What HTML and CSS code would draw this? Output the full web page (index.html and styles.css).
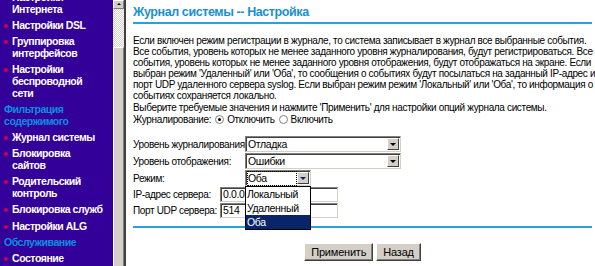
FILE: index.html
```html
<!DOCTYPE html>
<html lang="ru">
<head>
    <meta charset="UTF-8">
    <title>Журнал системы -- Настройка</title>
    <link rel="stylesheet" href="styles.css">
</head>
<body>
    <div class="page">
        <nav class="sidebar">
            <ul class="menu">
                <li class="item">Настройки<br>Интернета</li>
                <li class="item">Настройки DSL</li>
                <li class="item">Группировка<br>интерфейсов</li>
                <li class="item">Настройки<br>беспроводной<br>сети</li>
                <li class="section">Фильтрация<br>содержимого</li>
                <li class="item">Журнал системы</li>
                <li class="item">Блокировка<br>сайтов</li>
                <li class="item">Родительский<br>контроль</li>
                <li class="item">Блокировка служб</li>
                <li class="item">Настройки ALG</li>
                <li class="section">Обслуживание</li>
                <li class="item">Состояние</li>
            </ul>
        </nav>

        <div class="scrollbar">
            <div class="sb-up"></div>
            <div class="sb-track"></div>
            <div class="sb-thumb"></div>
        </div>

        <main class="content">
            <h1 class="title">Журнал системы -- Настройка</h1>

            <p class="intro">
                Если включен режим регистрации в журнале, то система записывает в журнал все выбранные события.<br>
                Все события, уровень которых не менее заданного уровня журналирования, будут регистрироваться. Все<br>
                события, уровень которых не менее заданного уровня отображения, будут отображаться на экране. Если<br>
                выбран режим 'Удаленный' или 'Оба', то сообщения о событиях будут посылаться на заданный IP-адрес и<br>
                порт UDP удаленного сервера syslog. Если выбран режим режим 'Локальный' или 'Оба', то информация о<br>
                событиях сохраняется локально.
            </p>
            <p class="hint">Выберите требуемые значения и нажмите 'Применить' для настройки опций журнала системы.</p>

            <div class="radio-row">
                <span>Журналирование:</span>
                <span class="radio checked"></span><span>Отключить</span>
                <span class="radio"></span><span>Включить</span>
            </div>

            <div class="form">
                <div class="row">
                    <span class="label">Уровень журналирования:</span>
                    <div class="select wide"><span class="value">Отладка</span><span class="arrow"></span></div>
                </div>
                <div class="row">
                    <span class="label">Уровень отображения:</span>
                    <div class="select wide"><span class="value">Ошибки</span><span class="arrow"></span></div>
                </div>
                <div class="row">
                    <span class="label">Режим:</span>
                    <div class="select narrow focused">
                        <span class="value"><span class="focus">Оба</span></span><span class="arrow"></span>
                        <ul class="dropdown">
                            <li>Локальный</li>
                            <li>Удаленный</li>
                            <li class="selected">Оба</li>
                        </ul>
                    </div>
                </div>
                <div class="row short">
                    <span class="label small">IP-адрес сервера:</span>
                    <div class="input">0.0.0.0</div>
                </div>
                <div class="row short">
                    <span class="label small">Порт UDP сервера:</span>
                    <div class="input">514</div>
                </div>
            </div>

            <div class="rule"></div>

            <div class="actions">
                <button type="button" class="btn">Применить</button>
                <button type="button" class="btn">Назад</button>
            </div>
        </main>
    </div>
</body>
</html>
```

FILE: styles.css
```css
* {
    margin: 0;
    padding: 0;
    box-sizing: border-box;
}

body {
    width: 595px;
    height: 266px;
    overflow: hidden;
    background: #fff;
    font-family: 'Liberation Sans', Arial, sans-serif;
    font-size: 10px;
    letter-spacing: -0.35px;
    color: #000;
}

.page {
    display: flex;
    height: 266px;
}

/* left menu frame */
.sidebar {
    width: 113px;
    flex: none;
    background: #330099;
    overflow: hidden;
}

.menu {
    list-style: none;
    margin-top: -8px;
    font-weight: bold;
    font-size: 10.5px;
    letter-spacing: -0.45px;
    line-height: 11.7px;
}

.menu li {
    margin-bottom: 4.6px;
}

.item {
    color: #fff;
    padding-left: 12px;
    position: relative;
}

.item::before {
    content: "";
    position: absolute;
    left: 4px;
    top: 4px;
    width: 4px;
    height: 4px;
    border-radius: 50%;
    background: #cc0055;
}

.section {
    color: #0a8fe0;
    padding-left: 4px;
}

/* frame scrollbar */
.scrollbar {
    width: 13px;
    flex: none;
    display: flex;
    flex-direction: column;
    border-right: 2px solid #404040;
    background: #d4d0c8;
}

.sb-up {
    height: 9px;
    background: #d4d0c8;
    border-top: 1px solid #fff;
    border-left: 1px solid #fff;
    border-right: 1px solid #808080;
    border-bottom: 1px solid #808080;
    position: relative;
}

.sb-up::after {
    content: "";
    position: absolute;
    left: 3px;
    top: 2px;
    border-left: 2px solid transparent;
    border-right: 2px solid transparent;
    border-bottom: 2px solid #000;
}

.sb-track {
    height: 38px;
    background-color: #eeece6;
    background-image: repeating-conic-gradient(#d4d0c8 0 25%, #fff 0 50%);
    background-size: 2px 2px;
}

.sb-thumb {
    flex: 1;
    background: #d4d0c8;
    border-top: 1px solid #fff;
    border-left: 1px solid #fff;
    border-right: 1px solid #808080;
}

/* main frame */
.content {
    flex: 1;
    min-width: 0;
    overflow: hidden;
    padding: 4px 3px 0 7px;
}

.title {
    font-size: 12.5px;
    letter-spacing: -0.4px;
    font-weight: bold;
    color: #1a8fcf;
    line-height: 16px;
    padding-bottom: 2px;
    border-bottom: 2px solid #2aa0d8;
}

.intro {
    margin-top: 11px;
    line-height: 11px;
    white-space: nowrap;
}

.hint {
    margin-top: 1px;
    line-height: 11px;
    white-space: nowrap;
}

.radio-row {
    display: flex;
    align-items: center;
    height: 11px;
    margin-top: 1px;
}

.radio {
    width: 9px;
    height: 9px;
    border-radius: 50%;
    border: 1px solid #808080;
    background: #fff;
    margin: 0 3px 0 4px;
    position: relative;
}

.radio.checked::after {
    content: "";
    position: absolute;
    left: 2px;
    top: 2px;
    width: 3px;
    height: 3px;
    border-radius: 50%;
    background: #000;
}

.form {
    margin-top: 11px;
    display: flex;
    flex-direction: column;
    gap: 1px;
}

.row {
    display: flex;
    align-items: center;
    height: 16px;
}

.row.short {
    height: 15px;
}

.label {
    width: 112px;
    flex: none;
    white-space: nowrap;
}

.label.small {
    width: 87px;
}

.select {
    position: relative;
    height: 16px;
    display: flex;
    background: #fff;
    border-top: 1px solid #808080;
    border-left: 1px solid #808080;
    border-right: 1px solid #d4d0c8;
    border-bottom: 1px solid #d4d0c8;
    box-shadow: inset 1px 1px 0 #404040;
    font-size: 10.5px;
}

.select.wide {
    width: 156px;
}

.select.narrow {
    width: 66px;
}

.value {
    flex: 1;
    padding: 1px 0 0 2px;
    line-height: 13px;
}

.focus {
    display: block;
    outline: 1px dotted #000;
    margin-right: 1px;
}

.arrow {
    width: 12px;
    flex: none;
    margin: 1px 1px 1px 0;
    background: #d4d0c8;
    border-top: 1px solid #fff;
    border-left: 1px solid #fff;
    border-right: 1px solid #404040;
    border-bottom: 1px solid #404040;
    position: relative;
}

.arrow::after {
    content: "";
    position: absolute;
    left: 2px;
    top: 4px;
    border-left: 3px solid transparent;
    border-right: 3px solid transparent;
    border-top: 3px solid #000;
}

.focused .arrow::after {
    border-top-color: #0a246a;
}

.dropdown {
    position: absolute;
    left: -1px;
    top: 15px;
    width: 66px;
    list-style: none;
    background: #fff;
    border: 1px solid #000;
    z-index: 2;
}

.dropdown li {
    height: 14px;
    line-height: 14px;
    padding-left: 1px;
}

.dropdown .selected {
    background: #0a246a;
    color: #fff;
}

.input {
    width: 118px;
    height: 15px;
    background: #fff;
    border-top: 1px solid #808080;
    border-left: 1px solid #808080;
    border-right: 1px solid #d4d0c8;
    border-bottom: 1px solid #d4d0c8;
    box-shadow: inset 1px 1px 0 #404040;
    font-size: 10.5px;
    line-height: 13px;
    padding-left: 2px;
}

.rule {
    margin-top: 8px;
    border-bottom: 2px solid #2aa0d8;
}

.actions {
    display: flex;
    justify-content: center;
    gap: 3px;
    margin-top: 15px;
}

.btn {
    height: 18px;
    padding: 0 6px;
    font-family: 'Liberation Sans', Arial, sans-serif;
    font-size: 11px;
    letter-spacing: -0.2px;
    background: #d4d0c8;
    border-top: 1px solid #fff;
    border-left: 1px solid #fff;
    border-right: 1px solid #404040;
    border-bottom: 1px solid #404040;
    box-shadow: inset -1px -1px 0 #808080;
}
```
